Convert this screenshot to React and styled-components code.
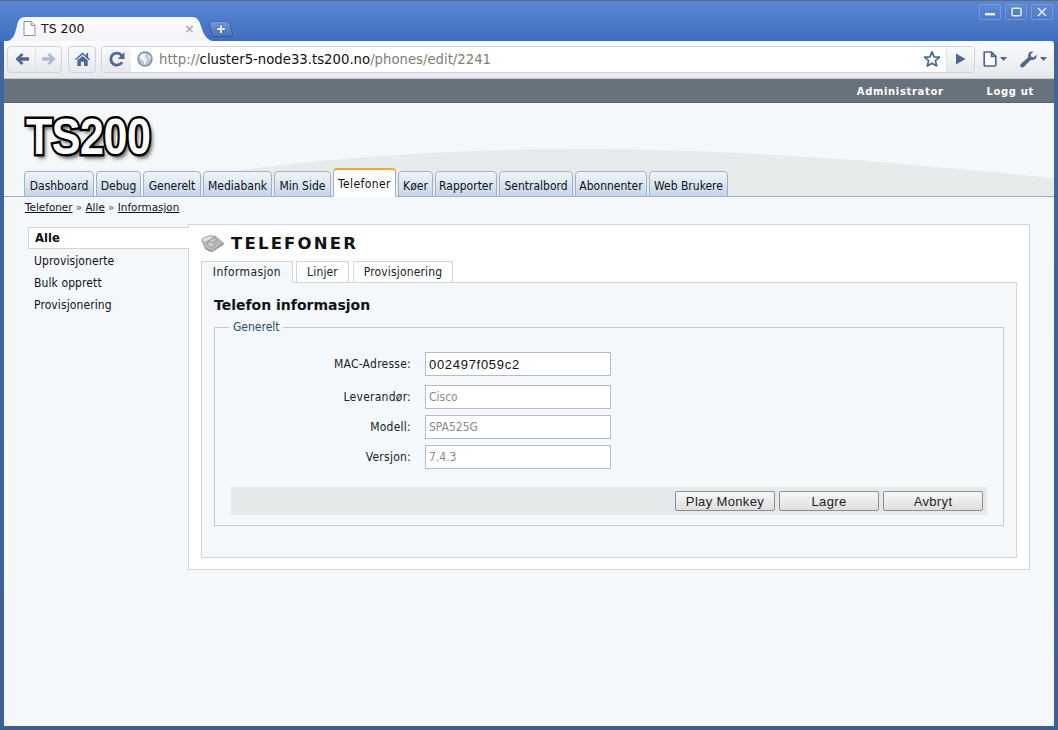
import React from 'react';
import styled, { createGlobalStyle } from 'styled-components';

const Global = createGlobalStyle`
  html, body { margin: 0; padding: 0; }
  body { font-family: "DejaVu Sans", sans-serif; overflow: hidden; }
  * { box-sizing: border-box; }
`;

const CONDENSED = '"DejaVu Sans Condensed", "DejaVu Sans", sans-serif';

const Frame = styled.div`
  width: 1058px;
  height: 730px;
  display: flex;
  flex-direction: column;
  padding: 0 4px 4px;
  background: linear-gradient(#5b87d3 0, #3f6dbe 41px, #3f659f 42px, #3c5f98 100%);
  border-top: 1px solid #5a6b85;
`;

/* browser chrome */
const TitleBar = styled.div`
  height: 40px;
  flex: none;
  position: relative;
  display: flex;
  align-items: flex-end;
  padding-left: 4px;
`;

const BrowserTab = styled.div`
  width: 204px;
  height: 24px;
  display: flex;
  align-items: center;
  padding: 0 17px 2px 15px;
  font-size: 12.5px;
  color: #111;
  background: linear-gradient(#fbfcfd, #f1f3f6);
  clip-path: path('M0 24 C6 22 7 16 9 9 C10 3 12 0 18 0 L184 0 C189 0 191 3 193 9 C195 16 198 22 204 24 Z');
`;

const TabTitle = styled.span`
  margin-left: 5px;
  flex: 1;
`;

const CloseX = styled.span`
  color: #9a9a9a;
  font-size: 13px;
`;

const NewTab = styled.div`
  width: 22px;
  height: 16px;
  margin: 0 0 4px -2px;
  display: flex;
  align-items: center;
  justify-content: center;
  background: linear-gradient(#7197d6, #4a74bb);
  border: 1px solid #34589a;
  border-top-color: #4a6fb0;
  border-radius: 3px 5px 3px 3px;
  transform: skewX(14deg);
`;

const WindowButtons = styled.div`
  position: absolute;
  top: 3px;
  right: 1px;
  display: flex;
  gap: 4px;
`;

const WindowButton = styled.div`
  width: 22px;
  height: 16px;
  display: flex;
  align-items: center;
  justify-content: center;
  border: 1px solid #739ad9;
  border-radius: 2px;
  background: linear-gradient(#5f8ad1, #4f7bc6);
`;

const Toolbar = styled.div`
  height: 38px;
  flex: none;
  display: flex;
  align-items: center;
  padding: 0 5px 1px 3px;
  background: linear-gradient(#fbfcfd, #e6e8eb);
  border-bottom: 1px solid #c5c8cc;
  border-radius: 0 3px 0 0;
`;

const ToolGroup = styled.div`
  height: 27px;
  display: flex;
  margin-right: ${(p) => p.$gap || 0}px;
  background: linear-gradient(#f9fafb, #e6e8eb);
  border: 1px solid #cfd2d6;
  border-radius: 4px;
`;

const ToolButton = styled.div`
  width: ${(p) => p.$w || 26}px;
  display: flex;
  align-items: center;
  justify-content: center;
  & + & { border-left: 1px solid #e0e2e5; }
`;

const Omnibox = styled.div`
  flex: 1;
  height: 27px;
  display: flex;
  background: #fff;
  border: 1px solid #cfd2d6;
  border-radius: 4px;
  overflow: hidden;
`;

const ReloadCell = styled.div`
  width: 29px;
  flex: none;
  display: flex;
  align-items: center;
  justify-content: center;
  background: linear-gradient(#f9fafb, #e6e8eb);
`;

const UrlArea = styled.div`
  flex: 1;
  display: flex;
  align-items: center;
  padding-left: 6px;
`;

const Url = styled.div`
  flex: 1;
  margin-left: 6px;
  font-size: 13.25px;
  color: #7d7f74;
  white-space: nowrap;
`;

const UrlHost = styled.span`
  color: #111;
`;

const PlayCell = styled.div`
  width: 28px;
  flex: none;
  display: flex;
  align-items: center;
  justify-content: center;
  margin-left: 5px;
  background: linear-gradient(#f9fafb, #e6e8eb);
  border-left: 1px solid #e0e2e5;
`;

const MenuIcons = styled.div`
  width: 74px;
  flex: none;
  display: flex;
  justify-content: space-between;
  padding: 0 2px 0 8px;
`;

/* page */
const Page = styled.div`
  flex: 1;
  display: flex;
  flex-direction: column;
  background: #f4f8fb;
  min-height: 0;
`;

const UserBar = styled.div`
  height: 24px;
  flex: none;
  display: flex;
  justify-content: flex-end;
  align-items: center;
  gap: 43px;
  padding: 1px 20px 0 0;
  background: #68727c;
  border-bottom: 1px solid #59626b;
  color: #fff;
  font-size: 10px;
  font-weight: bold;
  letter-spacing: 0.65px;
`;

const Header = styled.div`
  height: 94px;
  flex: none;
  position: relative;
  display: flex;
  flex-direction: column;
  justify-content: space-between;
  padding-left: 20px;
  border-bottom: 1px solid #9dabba;
`;

const Swoosh = styled.svg`
  position: absolute;
  left: 0;
  bottom: 0;
`;

const Logo = styled.div`
  position: relative;
  width: 130px;
  height: 56px;
  margin: 6px 0 0 2px;
  font-family: "Liberation Sans", sans-serif;
  font-weight: bold;
  font-size: 50px;
  line-height: 56px;
  letter-spacing: -0.5px;
  color: #fff;
  -webkit-text-stroke: 5px #000;
  paint-order: stroke fill;
  text-shadow: 3px 4px 5px rgba(0, 0, 0, 0.7);
  transform: scaleX(0.86);
  transform-origin: left center;
  white-space: nowrap;
`;

const MainTabs = styled.div`
  position: relative;
  display: flex;
  align-items: flex-end;
  gap: 2px;
  margin-bottom: -1px;
`;

const MainTab = styled.div`
  height: ${(p) => (p.$active ? 29 : 26)}px;
  width: ${(p) => p.$w}px;
  display: flex;
  align-items: center;
  justify-content: center;
  padding-top: ${(p) => (p.$active ? 1 : 3)}px;
  font-family: ${CONDENSED};
  font-size: 12px;
  letter-spacing: ${(p) => (p.$active ? 0.4 : 0)}px;
  color: #111;
  border: 1px solid #a2b2c4;
  border-top: ${(p) => (p.$active ? '2px solid #f0a830' : '1px solid #a2b2c4')};
  border-bottom-color: ${(p) => (p.$active ? '#fff' : '#a2b2c4')};
  border-radius: 4px 4px 0 0;
  background: ${(p) => (p.$active ? '#fff' : 'linear-gradient(#f1f5f9, #c4d6ea)')};
`;

const Crumbs = styled.div`
  flex: none;
  height: 27px;
  padding: 3px 0 0 21px;
  font-size: 10.4px;
  line-height: 14px;
  color: #555;
`;

const Crumb = styled.a`
  color: #111;
  text-decoration: underline;
`;

const Body = styled.div`
  display: flex;
  align-items: flex-start;
  padding-left: 24px;
`;

const Side = styled.div`
  width: 161px;
  flex: none;
  padding-top: 3px;
  position: relative;
  z-index: 1;
`;

const SideItem = styled.div`
  height: 22px;
  display: flex;
  align-items: center;
  padding-left: 6px;
  margin-bottom: ${(p) => (p.$active ? 1 : 0)}px;
  font-family: ${(p) => (p.$active ? '"DejaVu Sans", sans-serif' : CONDENSED)};
  font-size: ${(p) => (p.$active ? 11.6 : 12)}px;
  font-weight: ${(p) => (p.$active ? 'bold' : 'normal')};
  letter-spacing: ${(p) => (p.$active ? 0 : 0.1)}px;
  color: #111;
  ${(p) => p.$active && `
    background: #fff;
    border: 1px solid #ced5db;
    border-right: 0;
  `}
`;

const Panel = styled.div`
  width: 842px;
  margin-left: -1px;
  height: 346px;
  background: #fff;
  border: 1px solid #cfd6db;
  padding: 0 12px 12px;
`;

const PanelTitle = styled.div`
  height: 36px;
  display: flex;
  align-items: center;
  gap: 7px;
  font-size: 16.5px;
  font-weight: bold;
  letter-spacing: 2.2px;
  color: #111;
`;

const SubTabs = styled.div`
  display: flex;
  gap: 3px;
  margin-bottom: -1px;
  position: relative;
`;

const SubTab = styled.div`
  width: ${(p) => p.$w}px;
  margin-right: ${(p) => p.$extra || 0}px;
  height: 22px;
  display: flex;
  align-items: center;
  justify-content: center;
  font-family: ${CONDENSED};
  font-size: 12px;
  letter-spacing: ${(p) => (p.$active ? 0.4 : 0.15)}px;
  color: #222;
  background: ${(p) => (p.$active ? '#f4f8fb' : '#fff')};
  border: 1px solid #cfd6db;
  border-bottom-color: ${(p) => (p.$active ? '#f4f8fb' : '#cfd6db')};
`;

const TabBody = styled.div`
  height: 276px;
  background: #f4f8fb;
  border: 1px solid #cfd6db;
  padding: 12px 12px 0;
`;

const SectionTitle = styled.h2`
  margin: 0;
  height: 25px;
  font-size: 14px;
  line-height: 20px;
  font-weight: bold;
  color: #111;
`;

const Fieldset = styled.fieldset`
  margin: 0;
  width: 790px;
  height: 206px;
  padding: 18px 16px 0;
  border: 1px solid #c3ccd2;
`;

const Legend = styled.legend`
  margin-left: -2px;
  padding: 0 3px 0 4px;
  font-family: ${CONDENSED};
  font-size: 12px;
  color: #1f5365;
`;

const FormRow = styled.div`
  height: 24px;
  margin-bottom: ${(p) => p.$mb}px;
  display: flex;
  align-items: center;
  gap: 14px;
`;

const Label = styled.label`
  width: 180px;
  text-align: right;
  font-family: ${CONDENSED};
  font-size: 12px;
  letter-spacing: 0.25px;
  color: #222;
`;

const Field = styled.input`
  width: 186px;
  height: 24px;
  padding: 0 3px;
  background: #fff;
  border: 1px solid #b6bcc1;
  outline: 0;
  font-family: ${(p) => (p.disabled ? CONDENSED : '"Liberation Sans", sans-serif')};
  font-size: ${(p) => (p.disabled ? 12 : 13)}px;
  letter-spacing: ${(p) => (p.disabled ? 0 : 0.7)}px;
  color: ${(p) => (p.disabled ? '#8b8b8b' : '#111')};
`;

const ButtonBar = styled.div`
  height: 28px;
  margin-top: 18px;
  display: flex;
  justify-content: flex-end;
  align-items: center;
  gap: 4px;
  padding-right: 4px;
  background: #e5e9ea;
`;

const Button = styled.button`
  width: 100px;
  height: 20px;
  padding: 0;
  font-family: "Liberation Sans", sans-serif;
  font-size: 13px;
  letter-spacing: 0.35px;
  color: #222;
  background: linear-gradient(#f8f8f8, #dedede);
  border: 1px solid #8f8f8f;
  border-radius: 2px;
`;

const NAV_DARK = '#4a6797';

const ArrowIcon = ({ dir, color }) => (
  <svg width="16" height="14" viewBox="0 0 16 14">
    <path
      d="M7.5 1 L1.5 7 L7.5 13 L9.5 11 L7 8.8 H15 V5.2 H7 L9.5 3 Z"
      fill={color}
      transform={dir === 'right' ? 'matrix(-1 0 0 1 16 0)' : undefined}
    />
  </svg>
);

const HomeIcon = () => (
  <svg width="15" height="16" viewBox="0 0 16 16">
    <path d="M8 1 L12 4.6 V1.5 H14 V6.4 L16 8.2 L15 9.3 L8 3.3 L1 9.3 L0 8.2 Z" fill={NAV_DARK} />
    <path d="M2.5 9.4 L8 4.8 L13.5 9.4 V15.5 H9.7 V11 H6.3 V15.5 H2.5 Z" fill={NAV_DARK} />
  </svg>
);

const ReloadIcon = () => (
  <svg width="16" height="16" viewBox="0 0 16 16">
    <path
      d="M13 11.2 A6 6 0 1 1 12.6 4.4"
      fill="none"
      stroke={NAV_DARK}
      strokeWidth="2.8"
    />
    <path d="M15.5 1 V8 H8.7 Z" fill={NAV_DARK} />
  </svg>
);

const GlobeIcon = () => (
  <svg width="16" height="16" viewBox="0 0 16 16">
    <circle cx="8" cy="8" r="7" fill="#b9c4d4" stroke="#7f8ea6" strokeWidth="1.4" />
    <path d="M5 2.5 L9 3 L8 6 L10.5 8 L9 12 L7 14 L6.4 10 L3.5 8 L2.5 5.5 Z" fill="#eef1f5" />
    <path d="M11 3.5 L13.5 6 L13 8.5 L11.5 6.5 Z" fill="#eef1f5" />
  </svg>
);

const StarIcon = () => (
  <svg width="18" height="18" viewBox="0 0 18 18">
    <path
      d="M9 1.8 L11.1 6.8 L16.5 7.2 L12.4 10.7 L13.7 16 L9 13.2 L4.3 16 L5.6 10.7 L1.5 7.2 L6.9 6.8 Z"
      fill="#fff"
      stroke={NAV_DARK}
      strokeWidth="1.7"
      strokeLinejoin="round"
    />
  </svg>
);

const PlayIcon = () => (
  <svg width="11" height="12" viewBox="0 0 11 12">
    <path d="M1 0.5 L10.5 6 L1 11.5 Z" fill={NAV_DARK} />
  </svg>
);

const Caret = () => (
  <svg width="7" height="4" viewBox="0 0 7 4">
    <path d="M0 0 H7 L3.5 4 Z" fill={NAV_DARK} />
  </svg>
);

const MenuIcon = styled.div`
  display: flex;
  align-items: center;
  gap: 3px;
`;

const PageIcon = () => (
  <svg width="14" height="16" viewBox="0 0 14 16">
    <path
      d="M1.2 1 H8.5 L12.8 5.3 V13.8 C12.8 14.5 12.4 15 11.7 15 H2.3 C1.6 15 1.2 14.5 1.2 13.8 Z M8.5 1 V5.3 H12.8"
      fill="#fff"
      stroke={NAV_DARK}
      strokeWidth="1.7"
    />
  </svg>
);

const WrenchIcon = () => (
  <svg width="17" height="17" viewBox="0 0 16 16">
    <path
      d="M15.5 3.6 L12.8 6 L10.4 5.2 L10.2 2.9 L12.6 0.6 C10 -0.2 7.4 1.6 7.6 4.6 L7.8 5.8 L1 12 C0 13 0 14.2 0.8 15 C1.6 15.8 2.9 15.8 3.8 14.9 L10 8.4 C13.4 9.2 16.3 6.8 15.5 3.6 Z"
      fill={NAV_DARK}
    />
  </svg>
);

const DocIcon = () => (
  <svg width="13" height="15" viewBox="0 0 13 15">
    <path
      d="M1 0.5 H8 L12 4.5 V14.5 H1 Z M8 0.5 V4.5 H12"
      fill="#fdfdfd"
      stroke="#8b8f96"
      strokeWidth="1"
    />
  </svg>
);

const PhoneIcon = () => (
  <svg width="23" height="17" viewBox="0 0 23 17">
    <path d="M1 6 L14 0.8 L22.5 8 L11 16.5 C9 16.5 6 15 4 13 Z" fill="#b4b7b8" stroke="#8b8f90" strokeWidth="0.6" />
    <path d="M0.6 4.6 C3 2 8 0.5 11 0.8 L14 2.2 L3.4 8 Z" fill="#dcdfdf" stroke="#8a8d8e" strokeWidth="0.8" />
    <path d="M8 5.4 L13.4 3 L16.2 5.2 L10.8 7.8 Z" fill="#bcdcb8" stroke="#75807a" strokeWidth="0.5" />
    <path d="M6 8.4 L10 6.6 L14 10 L10 12.4 Z" fill="#cdcfd0" stroke="#7f8384" strokeWidth="0.5" />
    <path d="M4 13 L11 16.5 L22.5 8 L22.5 9.5 L11 17 L4 14 Z" fill="#77797a" />
  </svg>
);

const NAV_TABS = [
  ['Dashboard', 70], ['Debug', 45], ['Generelt', 58], ['Mediabank', 69], ['Min Side', 57],
  ['Telefoner', 63], ['Køer', 35], ['Rapporter', 62], ['Sentralbord', 74], ['Abonnenter', 72], ['Web Brukere', 79],
];

const SIDE_ITEMS = ['Uprovisjonerte', 'Bulk opprett', 'Provisjonering'];

const DISABLED_FIELDS = [
  ['Leverandør:', 'Cisco', 6],
  ['Modell:', 'SPA525G', 6],
  ['Versjon:', '7.4.3', 0],
];

const App = () => {
  return (
    <Frame>
      <Global />
      <TitleBar>
        <BrowserTab>
          <DocIcon />
          <TabTitle>TS 200</TabTitle>
          <CloseX>×</CloseX>
        </BrowserTab>
        <NewTab>
          <svg width="10" height="10" viewBox="0 0 10 10" style={{ transform: 'skewX(-14deg)' }}>
            <path d="M3.5 0.5 H6.5 V3.5 H9.5 V6.5 H6.5 V9.5 H3.5 V6.5 H0.5 V3.5 H3.5 Z" fill="#dfe8f6" stroke="#41659f" strokeWidth="0.8" />
          </svg>
        </NewTab>
        <WindowButtons>
          <WindowButton>
            <svg width="10" height="10" viewBox="0 0 10 10"><rect x="0" y="6" width="10" height="2.4" fill="#e6edf8" /></svg>
          </WindowButton>
          <WindowButton>
            <svg width="11" height="10" viewBox="0 0 11 10"><rect x="1" y="1.2" width="9" height="7.6" rx="1" fill="none" stroke="#e6edf8" strokeWidth="1.5" /></svg>
          </WindowButton>
          <WindowButton>
            <svg width="10" height="10" viewBox="0 0 10 10"><path d="M1 1 L9 9 M9 1 L1 9" stroke="#e6edf8" strokeWidth="1.6" /></svg>
          </WindowButton>
        </WindowButtons>
      </TitleBar>

      <Toolbar>
        <ToolGroup $gap={6}>
          <ToolButton $w={27}><ArrowIcon color={NAV_DARK} /></ToolButton>
          <ToolButton $w={26}><ArrowIcon dir="right" color="#a9bad6" /></ToolButton>
        </ToolGroup>
        <ToolGroup $gap={5}>
          <ToolButton $w={26}><HomeIcon /></ToolButton>
        </ToolGroup>
        <Omnibox>
          <ReloadCell><ReloadIcon /></ReloadCell>
          <UrlArea>
            <GlobeIcon />
            <Url>http://<UrlHost>cluster5-node33.ts200.no</UrlHost>/phones/edit/2241</Url>
            <StarIcon />
          </UrlArea>
          <PlayCell><PlayIcon /></PlayCell>
        </Omnibox>
        <MenuIcons>
          <MenuIcon><PageIcon /><Caret /></MenuIcon>
          <MenuIcon><WrenchIcon /><Caret /></MenuIcon>
        </MenuIcons>
      </Toolbar>

      <Page>
        <UserBar>
          <span>Administrator</span>
          <span>Logg ut</span>
        </UserBar>

        <Header>
          <Swoosh width="1050" height="50" viewBox="0 0 1050 50">
            <path d="M150 37 C300 12 440 3 570 3 C760 3 900 18 1050 32 V50 H150 Z" fill="#e8ebec" />
          </Swoosh>
          <Logo>TS200</Logo>
          <MainTabs>
            {NAV_TABS.map(([name, w]) => (
              <MainTab key={name} $w={w} $active={name === 'Telefoner'}>{name}</MainTab>
            ))}
          </MainTabs>
        </Header>

        <Crumbs>
          <Crumb>Telefoner</Crumb> » <Crumb>Alle</Crumb> » <Crumb>Informasjon</Crumb>
        </Crumbs>

        <Body>
          <Side>
            <SideItem $active>Alle</SideItem>
            {SIDE_ITEMS.map((item) => <SideItem key={item}>{item}</SideItem>)}
          </Side>
          <Panel>
            <PanelTitle><PhoneIcon />TELEFONER</PanelTitle>
            <SubTabs>
              <SubTab $active $w={92}>Informasjon</SubTab>
              <SubTab $w={53} $extra={1}>Linjer</SubTab>
              <SubTab $w={100}>Provisjonering</SubTab>
            </SubTabs>
            <TabBody>
              <SectionTitle>Telefon informasjon</SectionTitle>
              <Fieldset>
                <Legend>Generelt</Legend>
                <FormRow $mb={9}>
                  <Label>MAC-Adresse:</Label>
                  <Field defaultValue="002497f059c2" />
                </FormRow>
                {DISABLED_FIELDS.map(([label, value, mb]) => (
                  <FormRow key={label} $mb={mb}>
                    <Label>{label}</Label>
                    <Field disabled defaultValue={value} />
                  </FormRow>
                ))}
                <ButtonBar>
                  <Button>Play Monkey</Button>
                  <Button>Lagre</Button>
                  <Button>Avbryt</Button>
                </ButtonBar>
              </Fieldset>
            </TabBody>
          </Panel>
        </Body>
      </Page>
    </Frame>
  );
};

export default App;
